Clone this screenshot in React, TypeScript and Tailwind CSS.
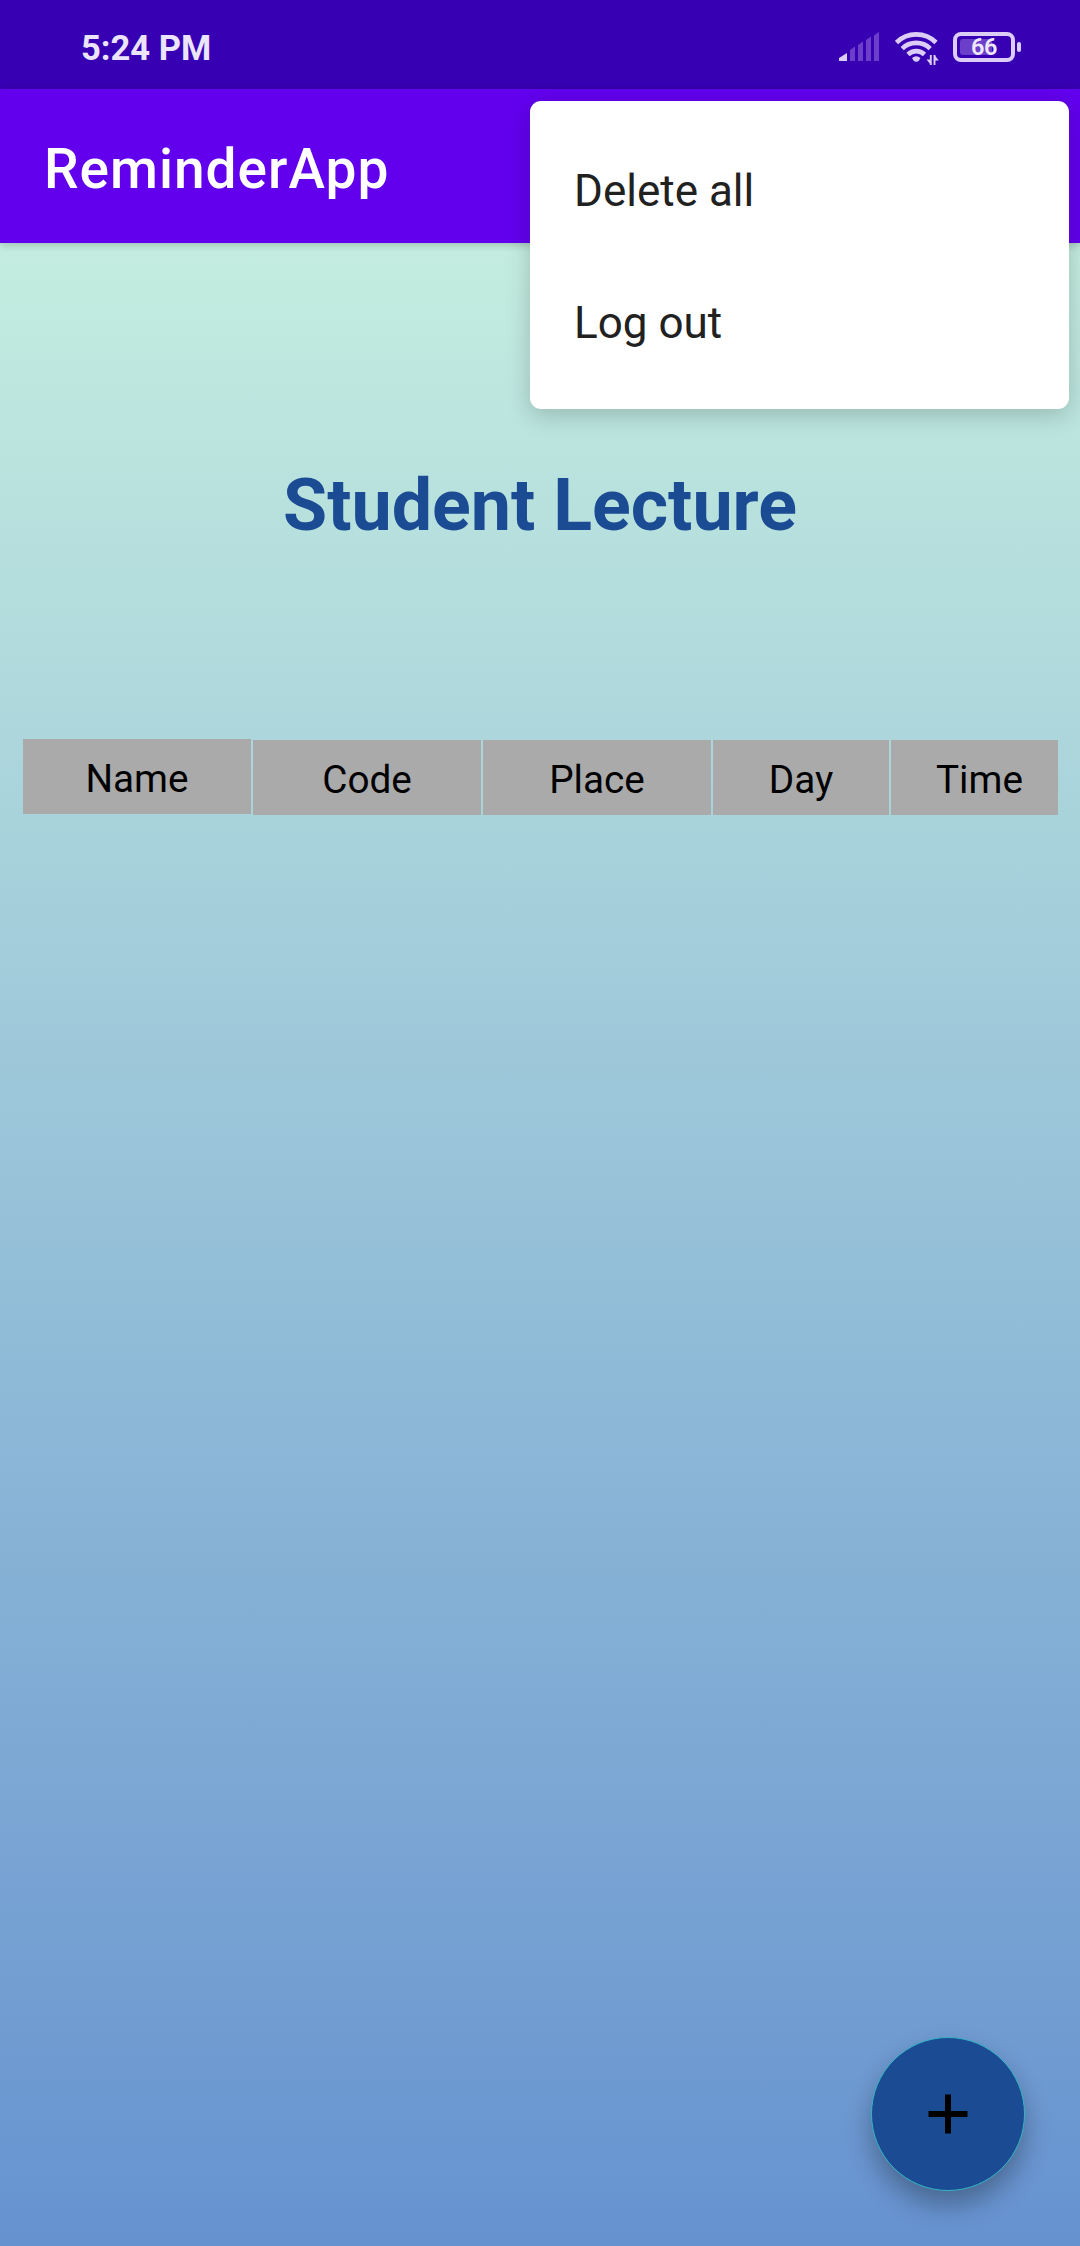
const columns = [
  { label: 'Name', cell: 'w-[228px] h-[75px]' },
  { label: 'Code', cell: 'w-[228px] h-[75px] mt-px' },
  { label: 'Place', cell: 'w-[228px] h-[75px] mt-px' },
  { label: 'Day', cell: 'w-[176px] h-[75px] mt-px' },
  { label: 'Time', cell: 'w-[167px] h-[75px] mt-px pl-[10px]' },
];

function SignalIcon() {
  return (
    <svg className="block" width="42" height="30" viewBox="0 0 42 30">
      <path d="M0 29v-3l8-5v8z" fill="#dccdf7" />
      <g fill="#6c3fcb">
        <path d="M11 18l5-3.500v14.500h-5z" />
        <path d="M19 13l5-3.500v19.500h-5z" />
        <path d="M27 8l5-3.500v24.500h-5z" />
        <path d="M35 3.500l5-3.500v29h-5z" />
      </g>
    </svg>
  );
}

function WifiIcon() {
  return (
    <svg className="block" width="44" height="34" viewBox="0 0 44 34">
      <g fill="none" stroke="#dccdf7" strokeWidth="4.600">
        <path d="M1.500 10.500a28 28 0 0 1 39.500 0" />
        <path d="M7.200 16.600a20 20 0 0 1 28 0" />
        <path d="M13 22.500a11.800 11.800 0 0 1 16.500 0" />
      </g>
      <path d="M17 26q4.250-3.500 8.500 0l-1.500 2.500q-2.750 2.500-5.500 0z" fill="#dccdf7" />
      <path d="M35.800 23v10M39.500 33V23" fill="none" stroke="#dccdf7" strokeWidth="1.900" />
      <path d="M31.500 27.500h4v5zM43.800 28.500h-4v-5z" fill="#dccdf7" />
    </svg>
  );
}

function BatteryIcon() {
  return (
    <div className="flex items-center gap-[2px]">
      <div className="relative flex h-[30px] w-[62px] items-center justify-center rounded-[8px] border-4 border-[#dccdf7]">
        <div className="absolute top-[3px] left-[3px] h-4 w-[32px] rounded-[3px] bg-[#6c3fcb]" />
        <span className="relative top-px text-[23.500px] leading-none font-semibold tracking-[-0.500px] text-[#efe8fc]">66</span>
      </div>
      <div className="h-[10px] w-1 rounded-sm bg-[#dccdf7]" />
    </div>
  );
}

export default function App() {
  return (
    <div className="relative flex h-[2246px] w-[1080px] flex-col overflow-hidden bg-[linear-gradient(180deg,#c4ede0_243px,#6692d0_2246px)] font-['Roboto',sans-serif]">
      <div className="flex h-[89px] shrink-0 items-start justify-between bg-[#3700b3] pr-[59px] pl-[81px]">
        <span className="mt-[27px] text-[34.500px] leading-[42px] font-bold text-[#ebe4fb]">5:24 PM</span>
        <div className="mt-8 flex items-start">
          <SignalIcon />
          <div className="ml-[14px]">
            <WifiIcon />
          </div>
          <div className="ml-[14px]">
            <BatteryIcon />
          </div>
        </div>
      </div>

      <header className="relative flex h-[154px] shrink-0 items-center bg-[#6200ee] pt-[5px] pl-11 shadow-[0_2px_8px_rgba(0,0,0,0.2)]">
        <h1 className="text-[55px] leading-[64px] font-medium tracking-[1px] text-white">ReminderApp</h1>
      </header>

      <main className="flex flex-col">
        <h2 className="mt-[221px] text-center text-[71.750px] leading-[84px] font-bold text-[#1b4b93]">Student Lecture</h2>
        <div className="mt-[191px] flex items-start gap-[2px] pl-[23px]">
          {columns.map((column) => (
            <div key={column.label} className={`flex shrink-0 items-center justify-center bg-[#aaaaaa] pt-[6px] text-[38.700px] text-black ${column.cell}`}>
              <span>{column.label}</span>
            </div>
          ))}
        </div>
      </main>

      <div className="absolute top-[101px] left-[530px] flex h-[308px] w-[539px] flex-col rounded-[11px] bg-white pt-[24px] text-[44px] text-[#212121] shadow-[0_6px_24px_rgba(0,0,0,0.2)]">
        <div className="flex h-[132px] items-center pl-11">Delete all</div>
        <div className="flex h-[132px] items-center pl-11">Log out</div>
      </div>

      <button className="absolute top-[2037px] left-[871px] flex size-[154px] items-center justify-center rounded-full border-[1.500px] border-[#35b5c5] bg-[#1b4b93] shadow-[0_14px_26px_rgba(0,0,0,0.3)]" aria-label="Add lecture">
        <svg width="40" height="40" viewBox="0 0 40 40">
          <path d="M20 .5v39M.5 20h39" stroke="black" strokeWidth="6" />
        </svg>
      </button>
    </div>
  );
}
